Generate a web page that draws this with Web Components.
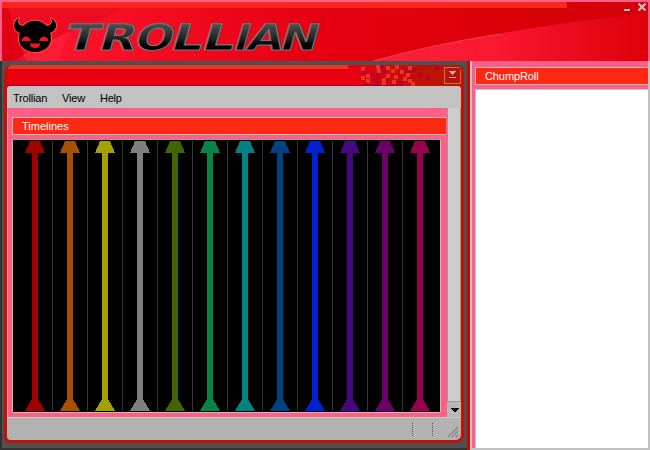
<!DOCTYPE html>
<html lang="en">
<head>
<meta charset="utf-8">
<title>Trollian</title>
<style>
html,body{margin:0;width:650px;height:450px;overflow:hidden;background:#ff5f87}
body{font:11px "Liberation Sans",Arial,sans-serif}
</style>
</head>
<body>
<trollian-app></trollian-app>
<script>
const define = (name, html, setup) => customElements.define(name, class extends HTMLElement {
  constructor() {
    super();
    const t = document.createElement('template');
    t.innerHTML = html;
    this.attachShadow({mode: 'open'}).appendChild(t.content.cloneNode(true));
  }
  connectedCallback() { if (setup) setup(this, this.shadowRoot); }
});

define('app-header', `
<style>
:host{display:block;height:61px;width:650px}
svg{display:block}
text{font-family:"DejaVu Sans","Liberation Sans",sans-serif;font-weight:700;font-size:36px}
</style>
<svg width="650" height="61" viewBox="0 0 650 61">
<defs>
<linearGradient id="a"><stop offset="0" stop-color="#f00017"/><stop offset=".5" stop-color="#e60012"/><stop offset=".8" stop-color="#d90007"/><stop offset="1" stop-color="#d3000a"/></linearGradient>
<linearGradient id="c"><stop offset="0" stop-color="#fa2039"/><stop offset=".45" stop-color="#fb1730"/><stop offset="1" stop-color="#dd000a"/></linearGradient>
<linearGradient id="f"><stop offset="0" stop-color="#ff1830"/><stop offset="1" stop-color="#e80013"/></linearGradient>
<linearGradient id="m" gradientUnits="userSpaceOnUse" x1="0" y1="-26" x2="0" y2="0"><stop offset="0" stop-color="#515151"/><stop offset=".55" stop-color="#262626"/><stop offset=".85" stop-color="#000"/></linearGradient>
</defs>
<rect width="650" height="61" fill="#ff5f87"/>
<rect x="2" y="2" width="646" height="59" fill="url(#a)"/>
<path d="M2 8H119Q106 16 96 30L14 61H2Z" fill="#ee0c22"/>
<path d="M119 8H290V61H14Q50 36 85 28Q105 20 119 8Z" fill="url(#f)"/>
<path d="M2 8H8L26 61H2Z" fill="#e20015"/>
<path d="M14 61Q38 44 70 32L58 61Z" fill="#ff2940" opacity=".4"/>
<path d="M373 61Q490 30 648 13V61Z" fill="url(#c)"/>
<path d="M373 61Q430 45 500 34" fill="none" stroke="#ff5266" opacity=".7"/>
<rect x="2" y="2" width="565" height="6" fill="#f52a1b"/>
<g transform="translate(1 49.5) skewX(-16)">
<text fill="url(#m)" stroke="#747474" stroke-width="1.2"><tspan x="62" textLength="34" lengthAdjust="spacingAndGlyphs">T</tspan><tspan x="96" textLength="37" lengthAdjust="spacingAndGlyphs">R</tspan><tspan x="132" textLength="38" lengthAdjust="spacingAndGlyphs">O</tspan><tspan x="168" textLength="32" lengthAdjust="spacingAndGlyphs">L</tspan><tspan x="199" textLength="33" lengthAdjust="spacingAndGlyphs">L</tspan><tspan x="231" textLength="15" lengthAdjust="spacingAndGlyphs">I</tspan><tspan x="244" textLength="36" lengthAdjust="spacingAndGlyphs">A</tspan><tspan x="277" textLength="38" lengthAdjust="spacingAndGlyphs">N</tspan></text>
</g>
<g id="devil">
<path stroke="#ff5038" stroke-width="2" stroke-linejoin="round" d="M19 18C12 22 13 31 20 33C16 44 24 52 35 52C46 52 54 44 50 33C58 30 58 22 51 18C53 22 52 25 47 26C40 19 30 19 23 26C18 25 17 22 19 18Z"/>
<path d="M19 18C12 22 13 31 20 33C16 44 24 52 35 52C46 52 54 44 50 33C58 30 58 22 51 18C53 22 52 25 47 26C40 19 30 19 23 26C18 25 17 22 19 18Z"/>
<path fill="#f11524" d="M21.500 41Q22 37 26 36.500Q30 37 31 41ZM39 41Q40 37 44 36.500Q48 37 48.500 41ZM30 43.500H40Q40 48 35 48Q30 48 30 43.500Z"/>
</g>
<rect x="624" y="9" width="6" height="2" fill="#c0c0c0"/>
<path d="M638.5 3.5L645.5 10.5M645.5 3.5L638.5 10.5" stroke="#c0c0c0" stroke-width="2.2"/>
</svg>`);

define('section-title', `
<style>
:host{display:block;box-sizing:border-box;height:18px;background:#ff2813;border-top:1px solid #c0c0c0;border-bottom:1px solid #c0c0c0;color:#fff;padding-left:9px;line-height:16px}
</style><slot></slot>`);

define('window-title', `
<style>
:host{display:flex;justify-content:flex-end;align-items:center;height:21px;box-sizing:border-box;position:relative;overflow:hidden;border-radius:6px 6px 0 0;background:linear-gradient(90deg,#e80010 0,#e80010 348px,#bd1206 422px)}
svg{display:block}
.mosaic{position:absolute;left:0;top:0}
button{all:unset;position:relative;width:15px;height:15px;border:1px solid #b07b58;margin-right:3px;display:grid;place-items:center}
</style>
<svg class="mosaic" width="457" height="21" shape-rendering="crispEdges"><path d="M5 0H344V4H1Z" fill="#e43927"/><g id="cells"></g><path d="M0 20.5H400" stroke="#a50035"/></svg>
<button aria-label="Roll up"><svg width="9" height="9" shape-rendering="crispEdges"><path d="M1 0H8L4.5 4Z" fill="#d8a8a8"/><path d="M1 6.5H8" stroke="#d8a8a8"/></svg></button>`,
(h, r) => {
  const orange = [[361,2],[361,11],[366,9],[366,14],[376,0],[377,4],[382,13],[386,1],[386,9],[382,17],[391,4],[394,10],[392,15],[395,0],[400,5],[403,12],[408,1],[406,8],[408,14],[411,17]];
  const purple = [[363,5],[370,8],[374,12],[375,16],[378,3],[382,5],[385,13],[386,9],[391,5],[395,0],[395,10],[398,16],[402,4],[407,6],[408,12],[412,3],[418,8],[426,11],[435,0],[365,17],[376,8],[380,0]];
  r.getElementById('cells').innerHTML =
    purple.map(([x,y]) => `<rect x="${x-4}" y="${y}" width="4" height="4" fill="#b9002d"/>`).join('') +
    orange.map(([x,y]) => `<rect x="${x-4}" y="${y}" width="4" height="4" fill="#e43927"/>`).join('');
});

define('menu-bar', `
<style>
:host{display:flex;align-items:center;height:22px;box-sizing:border-box;background:#c2c2c2;border-radius:3px 3px 0 0;padding:2px 0 0 6px;gap:15px;color:#000;letter-spacing:-.2px}
</style><slot></slot>`);

define('time-line', `
<style>
:host{display:block;width:35px;height:270px;box-sizing:border-box;border-right:1px solid #383838}
:host(:last-of-type){border-right-color:transparent}
svg{display:block}
</style>
<svg width="34" height="270" shape-rendering="crispEdges"><path fill="currentColor" d="M12 0H22L27 12H20V258L27 270H7L14 258V12H7Z"/></svg>`);

define('timeline-board', `
<style>
:host{display:flex;box-sizing:border-box;width:429px;height:274px;background:#000;border:1px solid #c0c0c0;border-top-color:#9b9b9b;border-radius:2px;padding:1px 0 1px 5px}
</style>`,
(h, r) => {
  for (const c of ['#a00000','#a65100','#a2a100','#7f7f7f','#416600','#078446','#008282','#004182','#0021cb','#450880','#6a006a','#99004d']) {
    const e = document.createElement('time-line');
    e.style.color = c;
    r.appendChild(e);
  }
});

define('scroll-bar', `
<style>
:host{display:block;width:14px;height:309px;background:#b8b8b8}
.thumb{height:294px;box-sizing:border-box;background:#cdcdcd;border:1px solid #999;border-top:0}
svg{display:block;margin:5px auto 0}
</style><div class="thumb"></div><svg width="9" height="7" shape-rendering="crispEdges"><path d="M0 1H9L5 5H4Z"/></svg>`);

define('status-bar', `
<style>
:host{display:flex;justify-content:flex-end;height:23px;box-sizing:border-box;background:#b2b2b2;border-top:1px solid #c9c9c9;border-radius:0 0 3px 3px}
</style>
<svg width="52" height="22"><path d="M3.5 5V19M23.5 5V19" stroke="#555" stroke-dasharray="1 1"/><path d="M39 19L49 9M43 19L49 13M47 19L49 17" stroke="#858585" stroke-width="1.3"/></svg>`);

define('main-window', `
<style>
:host{display:flex;width:470px;height:389px;box-sizing:border-box;flex-direction:column;background:linear-gradient(90deg,#333 2px,#505050 2px,#505050 4px,#505050 467px,#b81004 467px);padding:4px 0 0 4px}
.frame{width:460px;height:378px;box-sizing:border-box;border:3px solid #c51005;border-top:0;border-radius:8px 8px 8px 6px;background:#c51005;overflow:hidden}
window-title{margin:0 -3px}
.work{display:flex;height:309px;background:#ff5f87}
.content{flex:none;width:440px;height:309px;padding-left:4px;box-sizing:border-box;border-left:1px solid #d0a0aa}
.content section-title{margin-top:9px;width:434px;border-left:1px solid #c0c0c0}
.content timeline-board{margin-top:4px}
.bottom{margin:5px 3px 0 -4px;height:2px;background:#333}
</style>
<div class="frame">
<window-title></window-title>
<menu-bar><span>Trollian</span><span>View</span><span>Help</span></menu-bar>
<div class="work"><div class="content"><section-title>Timelines</section-title><timeline-board></timeline-board></div><scroll-bar></scroll-bar></div>
<status-bar></status-bar>
</div><div class="bottom"></div>`);

define('chump-roll', `
<style>
:host{display:flex;flex-direction:column;width:180px;height:389px;box-sizing:border-box;background:#ff5f87;border-left:2px solid #d0bcc0;border-right:2px solid #c0c0c0;border-bottom:2px solid #c0c0c0;padding:6px 0 0 3px}
.list{flex:1;margin-top:4px;background:#fff;border-top:1px solid #c0c0c0;border-left:1px solid #c0c0c0}
section-title{border-left:1px solid #c0c0c0;letter-spacing:-.1px}
</style><section-title>ChumpRoll</section-title><div class="list"></div>`);

define('trollian-app', `
<style>
:host{display:block;width:650px;height:450px}
main{display:flex}
</style><app-header></app-header><main><main-window></main-window><chump-roll></chump-roll></main>`);
</script>
</body>
</html>
